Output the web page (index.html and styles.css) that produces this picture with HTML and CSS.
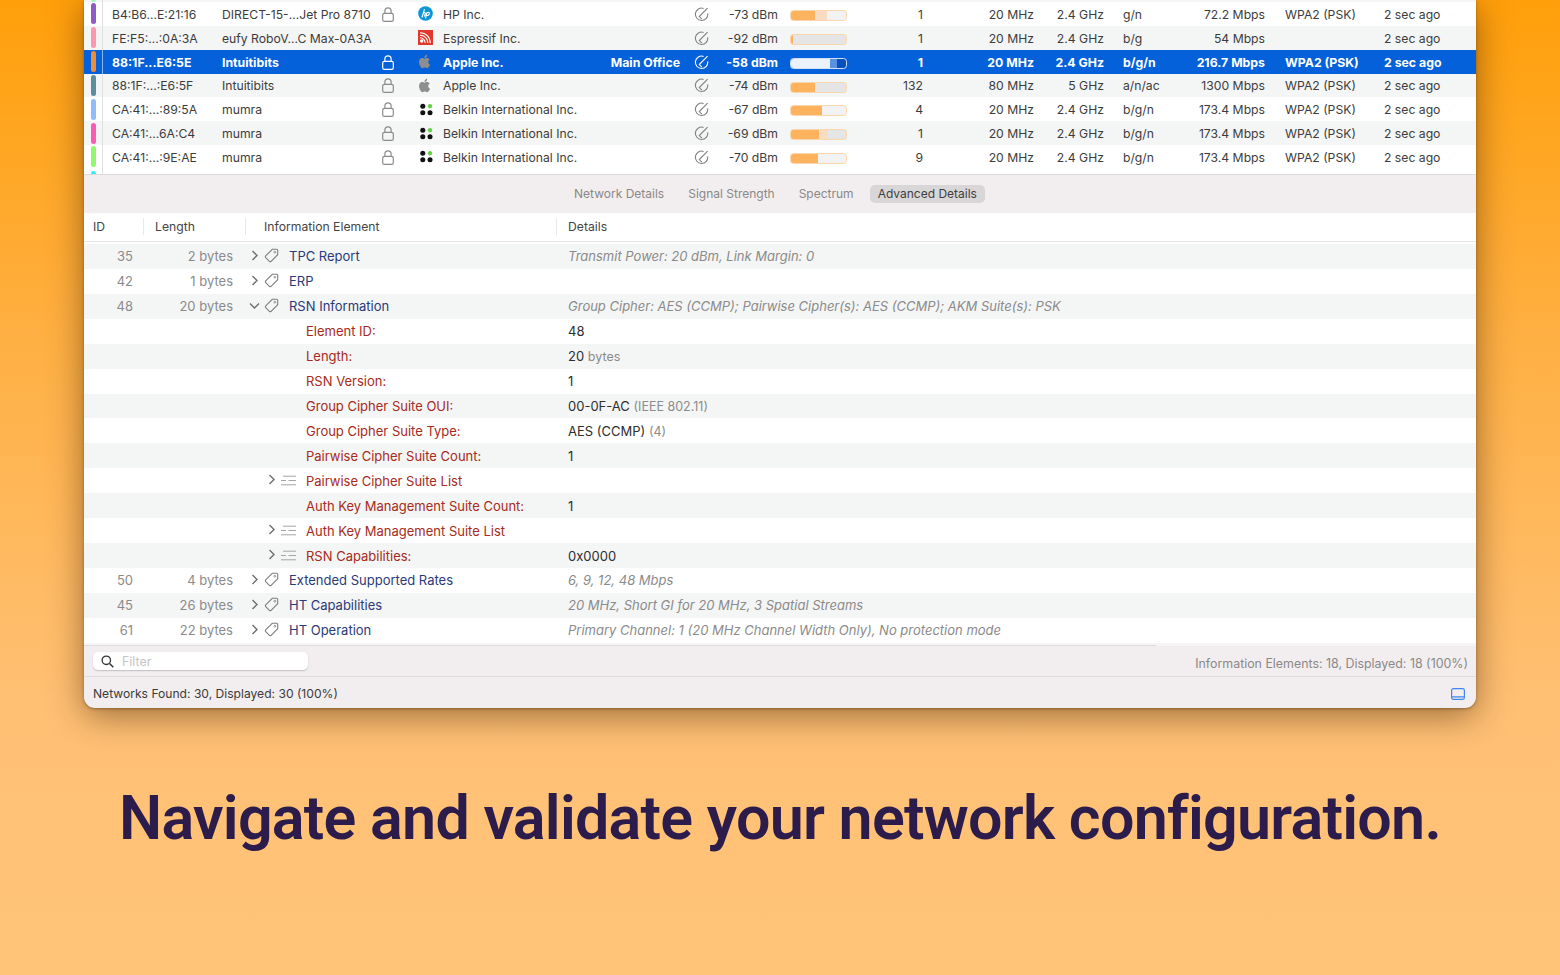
FILE: index.html
```html
<!DOCTYPE html>
<html lang="en">
<head>
<meta charset="utf-8">
<title>Navigate and validate your network configuration</title>
<link rel="stylesheet" href="styles.css">
</head>
<body>
<svg class="sprite" xmlns="http://www.w3.org/2000/svg">
  <symbol id="lock" viewBox="0 0 12 15"><rect x=".7" y="6.4" width="10.6" height="7.9" rx="1.6" fill="none" stroke="currentColor" stroke-width="1.2"/><path d="M2.9 6.4V3.9a3.1 3.1 0 0 1 6.2 0v2.5" fill="none" stroke="currentColor" stroke-width="1.2"/></symbol>
  <symbol id="phy" viewBox="0 0 15 15"><path d="M9.6 1.4A6.2 6.2 0 1 0 13.7 6.3" fill="none" stroke="currentColor" stroke-width="1.1"/><path d="M13.6 1.2 5.3 9.6l2.6 2.5" fill="none" stroke="currentColor" stroke-width="1.1"/></symbol>
  <symbol id="apple" viewBox="0 0 14 16"><path d="M10.4 8.5c0-1.8 1.5-2.6 1.6-2.7-.9-1.3-2.2-1.5-2.7-1.5-1.100-.1-2.2.7-2.800.7s-1.500-.7-2.400-.7C2.900 4.300 1.800 5 1.200 6c-1.300 2.200-.3 5.500.9 7.300.6.900 1.300 1.900 2.300 1.800.9 0 1.300-.6 2.400-.6s1.400.6 2.400.6 1.600-.9 2.200-1.800c.7-1 1-2 1-2.100-.1 0-2-.8-2-2.700Z" fill="currentColor"/><path d="M8.600 3.100c.5-.6.800-1.500.7-2.300-.7 0-1.600.5-2.100 1.100-.5.500-.9 1.400-.8 2.200.8.100 1.700-.4 2.200-1Z" fill="currentColor"/></symbol>
  <symbol id="belkin" viewBox="0 0 14 13"><circle cx="3" cy="3" r="2.700" fill="#111"/><circle cx="10.800" cy="3" r="2.300" fill="#5fd143"/><circle cx="3" cy="10" r="2.700" fill="#111"/><circle cx="10.800" cy="10" r="2.700" fill="#111"/></symbol>
  <symbol id="hp" viewBox="0 0 15 15"><circle cx="7.500" cy="7.500" r="7.300" fill="#0d96d8"/><path d="M6.500 3.200 4 11.500M5.200 7.300c1-1 2.200-1 2.200.2l-1 3M8.900 6.500 7.500 12.300M8.800 7c1.200-1 2.700-.9 2.500.6-.2 1.500-1.700 2.300-2.900 1.800" fill="none" stroke="#fff" stroke-width="1.100"/></symbol>
  <symbol id="esp" viewBox="0 0 15 15"><rect width="15" height="15" fill="#e0382c"/><g fill="none" stroke="#fff" stroke-width="1.100"><path d="M2 5.200c4.500 0 7.800 3.300 7.800 7.800M2 2.800c6 0 10.200 4.200 10.200 10.200M2 7.800c3 0 5.200 2.200 5.200 5.200"/></g><circle cx="3.700" cy="11" r="1.700" fill="#fff"/></symbol>
  <symbol id="tag" viewBox="0 0 15 15"><path d="M8.300 1.300h4.200a1.200 1.200 0 0 1 1.200 1.200v4.200L7.100 13.300a1.200 1.200 0 0 1-1.700 0L1.700 9.600a1.200 1.200 0 0 1 0-1.700Z" fill="none" stroke="currentColor" stroke-width="1.100"/><circle cx="10.800" cy="4.200" r=".9" fill="none" stroke="currentColor" stroke-width=".8"/></symbol>
  <symbol id="list" viewBox="0 0 15 11"><path d="M2 1.200h13M0 5.500h5M7.500 5.500H15M0 9.800h15" fill="none" stroke="currentColor" stroke-width="1"/></symbol>
  <symbol id="chev-r" viewBox="0 0 8 11"><path d="m1.500 1 4.500 4.500L1.500 10" fill="none" stroke="currentColor" stroke-width="1.400"/></symbol>
  <symbol id="chev-d" viewBox="0 0 11 8"><path d="m1 1.500 4.500 4.500L10 1.500" fill="none" stroke="currentColor" stroke-width="1.400"/></symbol>
</svg>

<main class="page">
  <section class="window">
    <div class="networks">
      <div class="stub alt"><span class="stripe-cell"><i class="stripe-end c-mint"></i></span></div>

      <div class="net">
        <span class="stripe-cell"><i class="stripe c-purple"></i></span><span class="cell pad">B4:B6...E:21:16</span><span class="cell">DIRECT-15-...Jet Pro 8710</span><span class="cell"><svg class="i-lock"><use href="#lock"/></svg></span><span class="cell"><svg class="i-vendor"><use href="#hp"/></svg></span><span class="cell">HP Inc.</span><span class="cell"></span><span class="cell"><svg class="i-phy"><use href="#phy"/></svg></span><span class="cell r">-73 dBm</span><span class="cell r"><span class="bar"><i class="fill" style="width:24px"></i><i class="peak" style="width:12px"></i></span></span><span class="cell r">1</span><span class="cell r">20 MHz</span><span class="cell r">2.4 GHz</span><span class="cell mode">g/n</span><span class="cell r">72.2 Mbps</span><span class="cell sec">WPA2 (PSK)</span><span class="cell">2 sec ago</span>
      </div>
      <div class="net alt">
        <span class="stripe-cell"><i class="stripe c-pink"></i></span><span class="cell pad">FE:F5:...:0A:3A</span><span class="cell">eufy RoboV...C Max-0A3A</span><span class="cell"></span><span class="cell"><svg class="i-vendor"><use href="#esp"/></svg></span><span class="cell">Espressif Inc.</span><span class="cell"></span><span class="cell"><svg class="i-phy"><use href="#phy"/></svg></span><span class="cell r">-92 dBm</span><span class="cell r"><span class="bar"><i class="fill" style="width:2px"></i></span></span><span class="cell r">1</span><span class="cell r">20 MHz</span><span class="cell r">2.4 GHz</span><span class="cell mode">b/g</span><span class="cell r">54 Mbps</span><span class="cell sec"></span><span class="cell">2 sec ago</span>
      </div>
      <div class="net selected">
        <span class="stripe-cell"><i class="stripe c-orange"></i></span><span class="cell pad">88:1F...E6:5E</span><span class="cell">Intuitibits</span><span class="cell"><svg class="i-lock"><use href="#lock"/></svg></span><span class="cell"><svg class="i-vendor i-apple"><use href="#apple"/></svg></span><span class="cell">Apple Inc.</span><span class="cell r">Main Office</span><span class="cell"><svg class="i-phy"><use href="#phy"/></svg></span><span class="cell r">-58 dBm</span><span class="cell r"><span class="bar"><i class="fill" style="width:39px"></i><i class="peak" style="width:7px"></i></span></span><span class="cell r">1</span><span class="cell r">20 MHz</span><span class="cell r">2.4 GHz</span><span class="cell mode">b/g/n</span><span class="cell r">216.7 Mbps</span><span class="cell sec">WPA2 (PSK)</span><span class="cell">2 sec ago</span>
      </div>
      <div class="net alt">
        <span class="stripe-cell"><i class="stripe c-teal"></i></span><span class="cell pad">88:1F:...:E6:5F</span><span class="cell">Intuitibits</span><span class="cell"><svg class="i-lock"><use href="#lock"/></svg></span><span class="cell"><svg class="i-vendor i-apple"><use href="#apple"/></svg></span><span class="cell">Apple Inc.</span><span class="cell"></span><span class="cell"><svg class="i-phy"><use href="#phy"/></svg></span><span class="cell r">-74 dBm</span><span class="cell r"><span class="bar"><i class="fill" style="width:24px"></i></span></span><span class="cell r">132</span><span class="cell r">80 MHz</span><span class="cell r">5 GHz</span><span class="cell mode">a/n/ac</span><span class="cell r">1300 Mbps</span><span class="cell sec">WPA2 (PSK)</span><span class="cell">2 sec ago</span>
      </div>
      <div class="net">
        <span class="stripe-cell"><i class="stripe c-sky"></i></span><span class="cell pad">CA:41:...:89:5A</span><span class="cell">mumra</span><span class="cell"><svg class="i-lock"><use href="#lock"/></svg></span><span class="cell"><svg class="i-vendor i-belkin"><use href="#belkin"/></svg></span><span class="cell">Belkin International Inc.</span><span class="cell"></span><span class="cell"><svg class="i-phy"><use href="#phy"/></svg></span><span class="cell r">-67 dBm</span><span class="cell r"><span class="bar"><i class="fill" style="width:31px"></i></span></span><span class="cell r">4</span><span class="cell r">20 MHz</span><span class="cell r">2.4 GHz</span><span class="cell mode">b/g/n</span><span class="cell r">173.4 Mbps</span><span class="cell sec">WPA2 (PSK)</span><span class="cell">2 sec ago</span>
      </div>
      <div class="net alt">
        <span class="stripe-cell"><i class="stripe c-magenta"></i></span><span class="cell pad">CA:41:...6A:C4</span><span class="cell">mumra</span><span class="cell"><svg class="i-lock"><use href="#lock"/></svg></span><span class="cell"><svg class="i-vendor i-belkin"><use href="#belkin"/></svg></span><span class="cell">Belkin International Inc.</span><span class="cell"></span><span class="cell"><svg class="i-phy"><use href="#phy"/></svg></span><span class="cell r">-69 dBm</span><span class="cell r"><span class="bar"><i class="fill" style="width:28px"></i><i class="peak" style="width:9px"></i></span></span><span class="cell r">1</span><span class="cell r">20 MHz</span><span class="cell r">2.4 GHz</span><span class="cell mode">b/g/n</span><span class="cell r">173.4 Mbps</span><span class="cell sec">WPA2 (PSK)</span><span class="cell">2 sec ago</span>
      </div>
      <div class="net">
        <span class="stripe-cell"><i class="stripe c-green"></i></span><span class="cell pad">CA:41:...:9E:AE</span><span class="cell">mumra</span><span class="cell"><svg class="i-lock"><use href="#lock"/></svg></span><span class="cell"><svg class="i-vendor i-belkin"><use href="#belkin"/></svg></span><span class="cell">Belkin International Inc.</span><span class="cell"></span><span class="cell"><svg class="i-phy"><use href="#phy"/></svg></span><span class="cell r">-70 dBm</span><span class="cell r"><span class="bar"><i class="fill" style="width:27px"></i></span></span><span class="cell r">9</span><span class="cell r">20 MHz</span><span class="cell r">2.4 GHz</span><span class="cell mode">b/g/n</span><span class="cell r">173.4 Mbps</span><span class="cell sec">WPA2 (PSK)</span><span class="cell">2 sec ago</span>
      </div>
      <div class="stub-bottom"><span class="stripe-cell"><i class="stripe-start c-cyan"></i></span></div>
    </div>

    <nav class="tabs">
      <span class="tab">Network Details</span>
      <span class="tab">Signal Strength</span>
      <span class="tab">Spectrum</span>
      <span class="tab active">Advanced Details</span>
    </nav>

    <div class="ie-head">
      <span class="h-id">ID</span>
      <span class="h-len">Length</span>
      <span class="h-el">Information Element</span>
      <span class="h-det">Details</span>
    </div>

    <div class="ie-list">
      <div class="ie alt"><span class="id">35</span><span class="len">2 bytes</span><span class="tree"><svg class="chev"><use href="#chev-r"/></svg><svg class="i-tag"><use href="#tag"/></svg><b class="name">TPC Report</b></span><span class="note">Transmit Power: 20 dBm, Link Margin: 0</span></div>
      <div class="ie"><span class="id">42</span><span class="len">1 bytes</span><span class="tree"><svg class="chev"><use href="#chev-r"/></svg><svg class="i-tag"><use href="#tag"/></svg><b class="name">ERP</b></span><span class="note"></span></div>
      <div class="ie alt"><span class="id">48</span><span class="len">20 bytes</span><span class="tree"><svg class="chev-open"><use href="#chev-d"/></svg><svg class="i-tag"><use href="#tag"/></svg><b class="name">RSN Information</b></span><span class="note">Group Cipher: AES (CCMP); Pairwise Cipher(s): AES (CCMP); AKM Suite(s): PSK</span></div>
      <div class="ie"><span></span><span></span><span class="tree leaf"><b class="field">Element ID:</b></span><span class="val">48</span></div>
      <div class="ie alt"><span></span><span></span><span class="tree leaf"><b class="field">Length:</b></span><span class="val">20 <small>bytes</small></span></div>
      <div class="ie"><span></span><span></span><span class="tree leaf"><b class="field">RSN Version:</b></span><span class="val">1</span></div>
      <div class="ie alt"><span></span><span></span><span class="tree leaf"><b class="field">Group Cipher Suite OUI:</b></span><span class="val">00-0F-AC <small>(IEEE 802.11)</small></span></div>
      <div class="ie"><span></span><span></span><span class="tree leaf"><b class="field">Group Cipher Suite Type:</b></span><span class="val">AES (CCMP) <small>(4)</small></span></div>
      <div class="ie alt"><span></span><span></span><span class="tree leaf"><b class="field">Pairwise Cipher Suite Count:</b></span><span class="val">1</span></div>
      <div class="ie"><span></span><span></span><span class="tree nested"><svg class="chev"><use href="#chev-r"/></svg><svg class="i-list"><use href="#list"/></svg><b class="field">Pairwise Cipher Suite List</b></span><span class="val"></span></div>
      <div class="ie alt"><span></span><span></span><span class="tree leaf"><b class="field">Auth Key Management Suite Count:</b></span><span class="val">1</span></div>
      <div class="ie"><span></span><span></span><span class="tree nested"><svg class="chev"><use href="#chev-r"/></svg><svg class="i-list"><use href="#list"/></svg><b class="field">Auth Key Management Suite List</b></span><span class="val"></span></div>
      <div class="ie alt"><span></span><span></span><span class="tree nested"><svg class="chev"><use href="#chev-r"/></svg><svg class="i-list"><use href="#list"/></svg><b class="field">RSN Capabilities:</b></span><span class="val">0x0000</span></div>
      <div class="ie"><span class="id">50</span><span class="len">4 bytes</span><span class="tree"><svg class="chev"><use href="#chev-r"/></svg><svg class="i-tag"><use href="#tag"/></svg><b class="name">Extended Supported Rates</b></span><span class="note">6, 9, 12, 48 Mbps</span></div>
      <div class="ie alt"><span class="id">45</span><span class="len">26 bytes</span><span class="tree"><svg class="chev"><use href="#chev-r"/></svg><svg class="i-tag"><use href="#tag"/></svg><b class="name">HT Capabilities</b></span><span class="note">20 MHz, Short GI for 20 MHz, 3 Spatial Streams</span></div>
      <div class="ie"><span class="id">61</span><span class="len">22 bytes</span><span class="tree"><svg class="chev"><use href="#chev-r"/></svg><svg class="i-tag"><use href="#tag"/></svg><b class="name">HT Operation</b></span><span class="note">Primary Channel: 1 (20 MHz Channel Width Only), No protection mode</span></div>
    </div>
    <div class="scrollbar"><i class="thumb"></i></div>

    <div class="filter-bar">
      <label class="filter">
        <svg class="i-search" viewBox="0 0 13 13"><circle cx="5.300" cy="5.300" r="4.200" fill="none" stroke="currentColor" stroke-width="1.300"/><path d="m8.500 8.500 3.800 3.800" stroke="currentColor" stroke-width="1.500"/></svg>
        <span class="placeholder">Filter</span>
      </label>
      <span class="ie-count">Information Elements: 18, Displayed: 18 (100%)</span>
    </div>

    <footer class="status">
      <span>Networks Found: 30, Displayed: 30 (100%)</span>
      <svg class="i-panel" viewBox="0 0 14 12"><rect x=".6" y=".6" width="12.800" height="10.800" rx="1.800" fill="none" stroke="currentColor" stroke-width="1.200"/><path d="M1 8.800h12" stroke="currentColor" stroke-width="1.200"/></svg>
    </footer>
  </section>

  <h1 class="headline">Navigate and validate your network configuration.</h1>
</main>
</body>
</html>
```
FILE: styles.css
```css
* { box-sizing: border-box; }
html, body { margin: 0; padding: 0; }
body {
  width: 1560px;
  height: 975px;
  overflow: hidden;
  font-family: Inter, "Liberation Sans", sans-serif;
  font-size: 12.2px;
  color: #3c3c3c;
}
.sprite { display: none; }
.page {
  height: 975px;
  display: flex;
  flex-direction: column;
  align-items: center;
  background: linear-gradient(180deg, #ff9f0a 0%, #ffb043 35%, #ffc074 72%, #ffc478 100%);
}
.window {
  width: 1392px;
  height: 707.500px;
  flex: none;
  display: flex;
  flex-direction: column;
  background: #f2eeef;
  border-radius: 0 0 11px 11px;
  box-shadow: 0 8px 34px rgba(60, 30, 0, .5), 0 1px 3px rgba(60, 30, 0, .4);
  overflow: hidden;
}

/* network table */
.networks {
  height: 175px;
  flex: none;
  background: #fff;
  border-bottom: 1px solid #dcdadb;
  overflow: hidden;
}
.net {
  height: 23.850px;
  display: grid;
  grid-template-columns: 19px 119px 160px 36px 25px 150px 87px 30px 68px 69px 76px 111px 70px 81px 80px 119px 92px;
  align-items: center;
  white-space: nowrap;
}
.alt { background: #f4f5f5; }
.stub { height: 2px; }
.stub-bottom { height: 5px; }
.stripe-cell {
  display: block;
  width: 19px;
  height: 100%;
  border-right: 1px solid #dfdfdf;
  padding-left: 6.500px;
  align-self: stretch;
  overflow: hidden;
}
.stripe { display: block; width: 5px; height: 21px; margin-top: 1.400px; border-radius: 2.500px; }
.stripe-end { display: block; width: 5px; height: 2px; border-radius: 0 0 2.500px 2.500px; }
.stripe-start { display: block; width: 5px; height: 5px; margin-top: 2px; border-radius: 2.500px 2.500px 0 0; }
.c-mint { background: #a4f5b9; }
.c-purple { background: #8d5cc6; }
.c-pink { background: #fb98b0; }
.c-orange { background: #f08e36; }
.c-teal { background: #5d8e9e; }
.c-sky { background: #90bcfb; }
.c-magenta { background: #fa5bb6; }
.c-green { background: #90f86c; }
.c-cyan { background: #2cf0f8; }
.cell { display: block; min-width: 0; padding-top: 1px; }
.pad { padding-left: 9px; }
.r { text-align: right; }
.mode { padding-left: 19px; }
.sec { padding-left: 20px; }

.selected { background: #0461da; color: #fff; font-weight: 700; font-size: 12.3px; }
.selected .stripe-cell { border-right-color: #8fb4ea; }
.selected .bar { background: #0a50bd; border-color: #cfe0f7; }
.selected .fill { background: #ebf2fc; }
.selected .peak { background: #5a90e2; }

/* network icons */
.i-lock { display: block; width: 12px; height: 15px; color: #8b8b8b; }
.selected .i-lock { color: #fff; }
.i-vendor { display: block; width: 15px; height: 15px; margin-bottom: 1px; }
.i-apple { color: #8e8e8e; width: 14px; }
.i-belkin { width: 13px; margin-left: 1.500px; }
.i-phy { display: block; width: 15px; height: 15px; margin-left: 13.500px; color: #808080; }
.selected .i-phy { color: #fff; }
.bar {
  display: inline-flex;
  width: 57px;
  height: 11px;
  vertical-align: middle;
  background: #f2f2f2;
  border: 1px solid #f9d6ae;
  border-radius: 3.500px;
  overflow: hidden;
}
.alt .bar { background: #e5e5e5; }
.fill { display: block; height: 100%; background: #fdb25d; }
.peak { display: block; height: 100%; background: #f8dcc1; }

/* tabs */
.tabs {
  height: 38px;
  flex: none;
  display: flex;
  align-items: center;
  justify-content: center;
  gap: 8px;
  padding-right: 9px;
  font-size: 12px;
}
.tab { padding: 2px 8px; height: 18px; line-height: 14px; border-radius: 5px; color: #8a8888; }
.tab.active { background: #d9d6d7; color: #3f3f3f; }

/* information elements */
.ie-head {
  height: 28.500px;
  flex: none;
  display: grid;
  grid-template-columns: 59px 102px 311px 1fr;
  align-items: center;
  background: #fff;
  border-bottom: 1px solid #e4e4e4;
  margin-bottom: 2.500px;
  box-shadow: 0 2.500px 0 #fff;
  color: #444;
}
.ie-head span { line-height: 17px; padding-left: 11px; border-left: 1px solid #e8e8e8; }
.ie-head .h-id { padding-left: 9px; border-left: 0; }
.ie-head .h-el { padding-left: 18px; }
.ie-list { flex: none; background: #fff; font-size: 13px; }
.ie {
  height: 24.930px;
  display: grid;
  grid-template-columns: 49px 100px 335px 1fr;
  align-items: center;
  white-space: nowrap;
}
.id, .len { text-align: right; color: #8b8b8b; }
.tree { display: flex; align-items: center; height: 100%; padding-left: 18px; }
.tree.leaf { padding-left: 73px; }
.tree.nested { padding-left: 35px; }
.name, .field { font-weight: 400; }
.name { color: #2b3a78; }
.field { color: #a72a20; }
.chev { display: block; width: 8px; height: 11px; color: #6e6e6e; margin-top: -2px; }
.chev-open { display: block; width: 11px; height: 8px; color: #6e6e6e; margin-left: -2px; margin-right: -1px; }
.i-tag { display: block; width: 15px; height: 15px; color: #7f7f7f; margin-left: 5px; margin-right: 10px; margin-top: -2px; }
.i-list { display: block; width: 15px; height: 11px; color: #a4a4a4; margin-left: 5px; margin-right: 10px; margin-top: -1px; }
.note { font-style: italic; color: #8b8b8b; }
.val { color: #2e2e2e; }
.val small { font-size: 12.500px; color: #8b8b8b; }
.scrollbar { height: 3.500px; flex: none; background: #f5f5f5; }
.thumb { display: block; width: 1072px; height: 1px; margin-top: 2.500px; background: #dfddde; }

/* bottom bars */
.filter-bar {
  height: 31px;
  flex: none;
  display: flex;
  align-items: center;
  justify-content: space-between;
  padding: 0 8px 0 9px;
  border-bottom: 1px solid #dcdadb;
  font-size: 12.400px;
}
.filter {
  width: 215px;
  height: 18px;
  display: flex;
  align-items: center;
  gap: 8px;
  padding-left: 8px;
  background: #fff;
  border-radius: 5px;
  box-shadow: 0 1px 1.500px rgba(0, 0, 0, .2);
}
.i-search { display: block; width: 13px; height: 13px; color: #333; }
.placeholder { color: #c4c4c4; }
.ie-count { color: #8b8888; margin-top: 5px; }
.status {
  flex: 1;
  display: flex;
  align-items: center;
  justify-content: space-between;
  padding: 2px 11px 0 9px;
  color: #3a3a3a;
  font-size: 12.100px;
}
.i-panel { display: block; width: 14px; height: 12px; color: #3f86f3; margin-top: 1px; }

/* headline */
.headline {
  margin: 72.500px 0 0;
  font-family: Roboto, Inter, sans-serif;
  font-size: 61px;
  line-height: 76px;
  font-weight: 600;
  letter-spacing: -0.75px;
  color: #2c1c4b;
  white-space: nowrap;
}
```
